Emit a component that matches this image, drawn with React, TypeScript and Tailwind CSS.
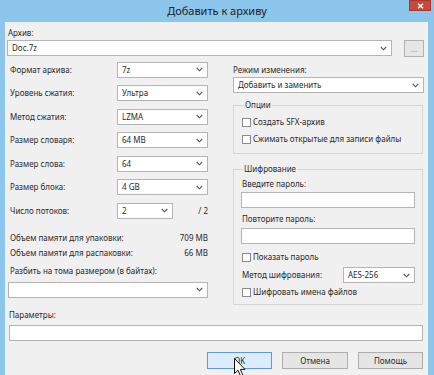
import React from "react";

function Chevron() {
  return (
    <svg width="7" height="5" viewBox="0 0 7 5" className="shrink-0">
      <path d="M0.8 1 L3.5 3.8 L6.2 1" fill="none" stroke="#555" strokeWidth="1.1" />
    </svg>
  );
}

function Combo({ value, className }: { value: string; className?: string }) {
  return (
    <div
      className={`h-[16px] flex items-center justify-between border border-[#b4b4b4] bg-white pl-[4px] pr-[4px] ${className ?? ""}`}
    >
      <span>{value}</span>
      <Chevron />
    </div>
  );
}

function Check({ label }: { label: string }) {
  return (
    <div className="h-[12px] flex items-center gap-[2px]">
      <span className="w-[9px] h-[9px] border border-[#8a8a8a] bg-white" />
      <span>{label}</span>
    </div>
  );
}

function Cursor() {
  return (
    <svg width="12" height="19" viewBox="0 0 12 19" className="absolute left-[234px] top-[358px]">
      <path
        d="M0.5 0.5 L0.5 15.5 L4 12.2 L6.6 18 L8.8 17 L6.3 11.4 L11 11.4 Z"
        fill="#fff"
        stroke="#111"
        strokeWidth="1"
        strokeLinejoin="round"
      />
    </svg>
  );
}

const rows = [
  ["Формат архива:", "7z"],
  ["Уровень сжатия:", "Ультра"],
  ["Метод сжатия:", "LZMA"],
  ["Размер словаря:", "64 MB"],
  ["Размер слова:", "64"],
  ["Размер блока:", "4 GB"],
];

export default function App() {
  return (
    <div className="relative w-[434px] h-[375px] overflow-hidden bg-[#8dc6ec] font-['Noto_Sans',sans-serif] text-[8px] leading-[10px] text-[#2a2a2a]">
      {/* title bar */}
      <div className="h-[22px] flex items-center justify-center text-[11px] leading-[14px] text-[#1c1c1c]">
        Добавить к архиву
      </div>
      <div className="absolute right-[3px] top-0 w-[22px] h-[11px] bg-[#c9483c] border border-[#a8372e] flex items-center justify-center">
        <svg width="7" height="6" viewBox="0 0 7 6">
          <path d="M1 0.8 L6 5.2 M6 0.8 L1 5.2" stroke="#fff" strokeWidth="1.5" />
        </svg>
      </div>

      {/* client area */}
      <div className="ml-[5px] w-[423px] h-[353px] bg-[#f0f0f0] pl-[2px] pr-[4px] pt-[6px]">
        <div className="pl-[1px]">Архив:</div>
        <div className="mt-[2px] h-[17px] flex items-start">
          <Combo value="Doc.7z" className="w-[385px]" />
          <div className="ml-auto w-[20px] h-[17px] border border-[#b0b0b0] bg-[#e6e6e6] flex items-center justify-center text-[#8a8a8a]">
            ...
          </div>
        </div>

        <div className="mt-[1px] flex">
          {/* left column */}
          <div className="w-[201px] flex flex-col">
            {rows.map(([l, v]) => (
              <div key={l} className="h-[23.5px] flex items-center">
                <span className="w-[110px] pl-[3px]">{l}</span>
                <Combo value={v} className="w-[91px]" />
              </div>
            ))}
            <div className="h-[23.5px] flex items-center">
              <span className="w-[110px] pl-[3px]">Число потоков:</span>
              <Combo value="2" className="w-[56px]" />
              <span className="ml-auto">/ 2</span>
            </div>
            <div className="mt-[8px] h-[15px] flex items-center justify-between pl-[3px]">
              <span>Объем памяти для упаковки:</span>
              <span>709 MB</span>
            </div>
            <div className="h-[15px] flex items-center justify-between pl-[3px]">
              <span>Объем памяти для распаковки:</span>
              <span>66 MB</span>
            </div>
            <div className="mt-[4px] h-[12px] flex items-center pl-[3px]">
              Разбить на тома размером (в байтах):
            </div>
            <Combo value="" className="mt-[5px] ml-[1px]" />
          </div>

          {/* right column */}
          <div className="ml-[25px] w-[191px] flex flex-col">
            <div className="mt-[7px] h-[10px]">Режим изменения:</div>
            <Combo value="Добавить и заменить" className="mt-[2px]" />

            <fieldset className="mt-[7px] w-[190px] border border-[#d5d5d5] px-[8px] pb-[8px]">
              <legend className="ml-[2px] px-[1px] h-[10px]">Опции</legend>
              <div className="mt-[6px]">
                <Check label="Создать SFX-архив" />
              </div>
              <div className="mt-[5px]">
                <Check label="Сжимать открытые для записи файлы" />
              </div>
            </fieldset>

            <fieldset className="mt-[10px] w-[190px] border border-[#d5d5d5] px-[7px] pb-[6px]">
              <legend className="ml-[2px] px-[1px] h-[10px]">Шифрование</legend>
              <div className="mt-[5px] h-[10px] pl-[1px]">Введите пароль:</div>
              <div className="mt-[3px] h-[16px] border border-[#b4b4b4] bg-white" />
              <div className="mt-[6px] h-[10px] pl-[1px]">Повторите пароль:</div>
              <div className="mt-[4px] h-[16px] border border-[#b4b4b4] bg-white" />
              <div className="mt-[7px] pl-[1px]">
                <Check label="Показать пароль" />
              </div>
              <div className="mt-[4px] h-[16px] flex items-center pl-[1px]">
                <span className="w-[101px]">Метод шифрования:</span>
                <Combo value="AES-256" className="flex-1" />
              </div>
              <div className="mt-[3px] pl-[1px]">
                <Check label="Шифровать имена файлов" />
              </div>
            </fieldset>
          </div>
        </div>

        <div className="mt-[5px] h-[10px] pl-[2px]">Параметры:</div>
        <div className="mt-[5px] ml-[2px] w-[414px] h-[16px] border border-[#b4b4b4] bg-white" />

        <div className="mt-[11px] flex justify-end gap-[10px] pr-[1px]">
          <div className="w-[65px] h-[17px] border border-[#5b9bd8] bg-[#dcecfc] flex items-center justify-center">
            OK
          </div>
          <div className="w-[66px] h-[17px] border border-[#adadad] bg-[#e5e5e5] flex items-center justify-center">
            Отмена
          </div>
          <div className="w-[65px] h-[17px] border border-[#adadad] bg-[#e5e5e5] flex items-center justify-center">
            Помощь
          </div>
        </div>
      </div>
      <Cursor />
    </div>
  );
}
